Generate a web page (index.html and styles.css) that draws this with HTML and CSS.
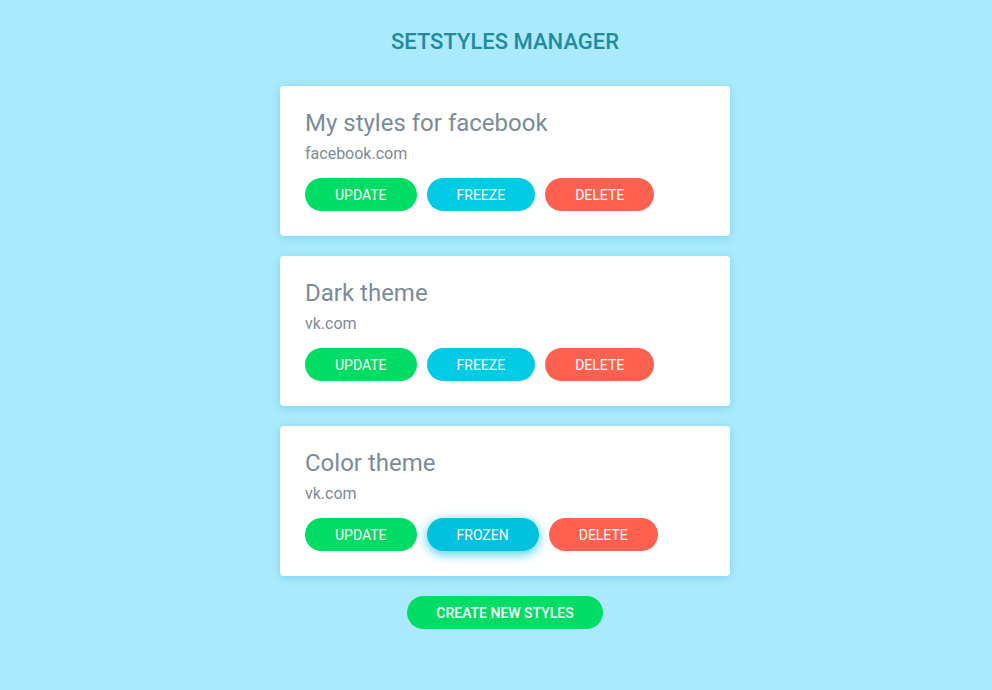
FILE: index.html
```html
<!DOCTYPE html>
<html>
<head>
<meta charset="utf-8">
<link rel="stylesheet" href="styles.css">
</head>
<body>
<div class="app">
  <h1 class="app-title">SETSTYLES MANAGER</h1>
  <div class="list">
    <div class="card">
      <h2 class="card-title">My styles for facebook</h2>
      <div class="card-site">facebook.com</div>
      <div class="actions">
        <button class="btn btn-green">UPDATE</button>
        <button class="btn btn-cyan">FREEZE</button>
        <button class="btn btn-red">DELETE</button>
      </div>
    </div>
    <div class="card">
      <h2 class="card-title">Dark theme</h2>
      <div class="card-site">vk.com</div>
      <div class="actions">
        <button class="btn btn-green">UPDATE</button>
        <button class="btn btn-cyan">FREEZE</button>
        <button class="btn btn-red">DELETE</button>
      </div>
    </div>
    <div class="card">
      <h2 class="card-title">Color theme</h2>
      <div class="card-site">vk.com</div>
      <div class="actions">
        <button class="btn btn-green">UPDATE</button>
        <button class="btn btn-cyan btn-frozen">FROZEN</button>
        <button class="btn btn-red">DELETE</button>
      </div>
    </div>
  </div>
  <button class="btn btn-green btn-create">CREATE NEW STYLES</button>
</div>
</body>
</html>
```

FILE: styles.css
```css
html, body {
  margin: 0;
  padding: 0;
  background: #aaeafc;
  font-family: Roboto, "Liberation Sans", sans-serif;
}
.app {
  display: flex;
  flex-direction: column;
  align-items: center;
  padding: 29px 0 0 18px;
}
.app-title {
  margin: 0;
  font-size: 22px;
  line-height: 26px;
  font-weight: 500;
  color: #1f8aa0;
}
.list {
  margin-top: 31px;
  display: flex;
  flex-direction: column;
  gap: 20px;
  width: 450px;
}
.card {
  background: #fff;
  border-radius: 4px;
  padding: 23px 25px 25px;
  box-shadow: 0 2px 8px rgba(40, 170, 220, 0.35);
}
.card-title {
  margin: 0;
  font-size: 24px;
  line-height: 28px;
  font-weight: 400;
  color: #7c8b99;
}
.card-site {
  margin-top: 7px;
  font-size: 16px;
  line-height: 19px;
  color: #7c8b99;
}
.actions {
  margin-top: 15px;
  display: flex;
  gap: 10px;
}
.btn {
  height: 33px;
  border: none;
  border-radius: 17px;
  padding: 0 30px;
  font-family: Roboto, "Liberation Sans", sans-serif;
  font-size: 14px;
  font-weight: 400;
  color: #fff;
  cursor: pointer;
}
.btn-green { background: #00dd64; }
.btn-cyan { background: #00cae4; }
.btn-red { background: #ff6150; }
.btn-frozen {
  background: #00c2de;
  box-shadow: 0 3px 12px rgba(0, 190, 225, 0.75);
}
.btn-create {
  margin-top: 20px;
  padding: 0 29px;
  font-weight: 500;
}
```
